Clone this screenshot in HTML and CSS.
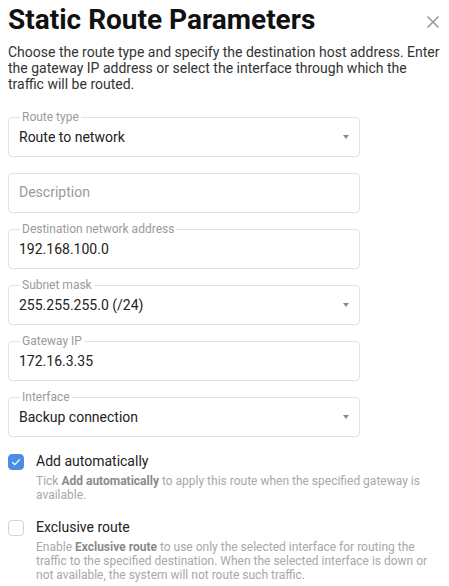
FILE: index.html
```html
<!DOCTYPE html>
<html lang="en">
<head>
<meta charset="utf-8">
<title>Static Route Parameters</title>
<link rel="stylesheet" href="styles.css">
</head>
<body>
<div class="dialog">
  <div class="header">
    <h1 class="title">Static Route Parameters</h1>
    <button class="close" aria-label="Close">
      <svg width="14" height="14" viewBox="0 0 14 14"><path d="M1.5 1.5L12.5 12.5M12.5 1.5L1.5 12.5" stroke="#9a9a9a" stroke-width="1.6" fill="none"/></svg>
    </button>
  </div>
  <p class="intro">Choose the route type and specify the destination host address. Enter the gateway IP address or select the interface through which the traffic will be routed.</p>

  <div class="fields">
    <div class="field select">
      <span class="label">Route type</span>
      <span class="value">Route to network</span>
      <span class="arrow"></span>
    </div>
    <div class="field">
      <span class="value placeholder">Description</span>
    </div>
    <div class="field">
      <span class="label">Destination network address</span>
      <span class="value">192.168.100.0</span>
    </div>
    <div class="field select">
      <span class="label">Subnet mask</span>
      <span class="value">255.255.255.0 (/24)</span>
      <span class="arrow"></span>
    </div>
    <div class="field">
      <span class="label">Gateway IP</span>
      <span class="value">172.16.3.35</span>
    </div>
    <div class="field select">
      <span class="label">Interface</span>
      <span class="value">Backup connection</span>
      <span class="arrow"></span>
    </div>
  </div>

  <div class="options">
    <div class="option">
      <div class="check-row">
        <span class="box checked">
          <svg width="10" height="8" viewBox="0 0 10 8"><path d="M1.2 4.2L3.8 6.6L8.8 1.4" stroke="#fff" stroke-width="1.3" fill="none"/></svg>
        </span>
        <span class="check-label">Add automatically</span>
      </div>
      <p class="hint">Tick <b>Add automatically</b> to apply this route when the specified gateway is available.</p>
    </div>
    <div class="option">
      <div class="check-row">
        <span class="box"></span>
        <span class="check-label">Exclusive route</span>
      </div>
      <p class="hint">Enable <b>Exclusive route</b> to use only the selected interface for routing the traffic to the specified destination. When the selected interface is down or not available, the system will not route such traffic.</p>
    </div>
  </div>
</div>
</body>
</html>
```

FILE: styles.css
```css
* { box-sizing: border-box; }
html, body { margin: 0; padding: 0; background: #fff; }
body {
  font-family: Roboto, "Liberation Sans", sans-serif;
  color: #222;
}
.dialog {
  padding: 3px 8px 0 8px;
}
.header {
  display: flex;
  justify-content: space-between;
  align-items: flex-start;
}
.title {
  margin: 0;
  font-size: 28px;
  line-height: 34px;
  font-weight: 700;
  color: #111;
}
.close {
  border: 0;
  background: none;
  padding: 0;
  margin: 12px 1px 0 0;
  width: 14px;
  height: 14px;
  display: flex;
}
.intro {
  margin: 7px 0 0 0;
  font-size: 14px;
  line-height: 16px;
  color: #333;
}
.fields {
  margin-top: 25px;
  display: flex;
  flex-direction: column;
  gap: 16px;
  width: 352px;
}
.field {
  position: relative;
  height: 40px;
  border: 1px solid #e2e2e2;
  border-radius: 4px;
  display: flex;
  align-items: center;
  padding: 0 10px;
}
.label {
  position: absolute;
  left: 11px;
  top: -9px;
  padding: 0 2px;
  background: #fff;
  font-size: 12px;
  line-height: 16px;
  color: #9a9a9a;
}
.value {
  font-size: 14px;
  line-height: 16px;
  color: #222;
}
.placeholder {
  color: #9a9a9a;
  margin-top: -3px;
}
.arrow {
  position: absolute;
  right: 10px;
  top: 17px;
  width: 0;
  height: 0;
  border-left: 3.5px solid transparent;
  border-right: 3.5px solid transparent;
  border-top: 4px solid #8a8a8a;
}
.options {
  margin-top: 15px;
  display: flex;
  flex-direction: column;
  gap: 16px;
}
.check-row {
  display: flex;
  align-items: center;
  gap: 12px;
  height: 18px;
}
.box {
  width: 16px;
  height: 16px;
  border: 1px solid #d4d4d4;
  border-radius: 4px;
  display: flex;
  align-items: center;
  justify-content: center;
  flex: none;
  margin-top: 2px;
}
.box.checked {
  background: #4a8de3;
  border-color: #4a8de3;
}
.check-label {
  font-size: 14px;
  line-height: 18px;
  color: #222;
}
.hint {
  margin: 4px 0 0 28px;
  font-size: 12px;
  line-height: 14px;
  color: #a8a8a8;
}
.hint b {
  color: #8a8a8a;
  font-weight: 700;
}
```
